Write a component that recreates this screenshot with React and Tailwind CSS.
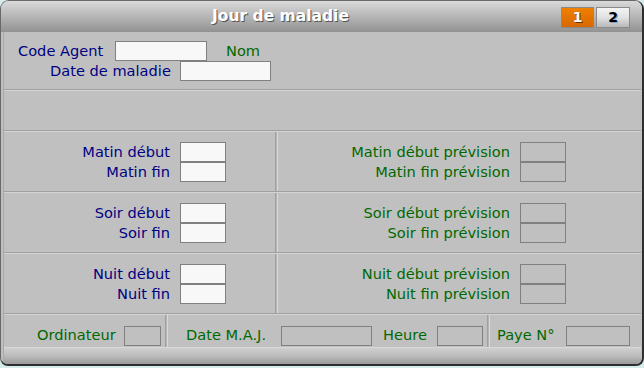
import React from "react";

const F = { fontFamily: '"DejaVu Sans", Verdana, sans-serif' };

function Inp({ w, white }) {
  return (
    <div
      className={`h-[20px] border border-[#808080] ${white ? "bg-[#f8f8f8]" : "bg-[#c0c0c0]"}`}
      style={{ width: w }}
    />
  );
}

function HSep() {
  return <div className="h-[2px] border-t border-[#a0a0a0] border-b border-b-[#d4d4d4]" />;
}

function VSep() {
  return <div className="w-[3px] self-stretch border-l border-[#a0a0a0] border-r border-r-[#d8d8d8] bg-[#b4b4b4]" />;
}

function Pair({ a, b, blue, padRight, white }) {
  const color = blue ? "text-[#000080]" : "text-[#006800]";
  return (
    <div className="flex-1 flex flex-col pt-[10px]" style={{ paddingRight: padRight }}>
      <div className="flex items-center justify-end h-[20px]">
        <span className={`${color} text-[14.6px] leading-none mr-[10px]`}>{a}</span>
        <Inp w={46} white={white} />
      </div>
      <div className="flex items-center justify-end h-[20px]">
        <span className={`${color} text-[14.6px] leading-none mr-[10px]`}>{b}</span>
        <Inp w={46} white={white} />
      </div>
    </div>
  );
}

function Row({ l1, l2, r1, r2 }) {
  return (
    <div className="flex h-[59px]">
      <div className="w-[271px] flex">
        <Pair a={l1} b={l2} blue padRight={49} white />
      </div>
      <VSep />
      <div className="flex-1 flex">
        <Pair a={r1} b={r2} padRight={75} />
      </div>
    </div>
  );
}

export default function App() {
  return (
    <div className="w-[644px] h-[368px] bg-[#d6ecea]" style={F}>
      <div className="w-[644px] h-[366px] rounded-t-[9px] rounded-b-[8px] border border-[#686868] border-r-2 border-b-2 border-r-[#2e2e2e] border-b-[#2e2e2e] overflow-hidden flex flex-col bg-[#c0c0c0]">
        {/* title bar */}
        <div className="h-[31px] flex items-center bg-gradient-to-b from-[#dadada] via-[#b6b6b6] to-[#929292]">
          <div className="flex-1 text-center">
            <span className="text-white font-bold text-[15.5px] [text-shadow:1px_1px_0_#555]">Jour de maladie</span>
          </div>
          <div className="w-[82px] flex gap-[2px] pl-[1px] pt-[1px]">
            <div className="w-[33px] h-[21px] border border-[#8a8a8a] bg-gradient-to-b from-[#f08000] to-[#d86800] flex items-center justify-center text-white font-bold text-[14px] [text-shadow:1px_1px_0_#6a3000]">1</div>
            <div className="w-[34px] h-[21px] border border-[#8a8a8a] bg-gradient-to-b from-[#f4f4f4] via-[#e2e2e2] to-[#b8b8b8] flex items-center justify-center text-black font-bold text-[14px] [text-shadow:1px_1px_0_#8aa0c0]">2</div>
          </div>
        </div>
        {/* body */}
        <div className="flex-1 flex flex-col pl-[2px] pr-[1px]">
          <div className="border-l border-[#a8a8a8] flex-1 flex flex-col">
            {/* top form */}
            <div className="h-[57px] pt-[9px] flex flex-col">
              <div className="flex items-center h-[20px]">
                <span className="ml-[14px] text-[#000080] text-[14.6px] leading-none w-[97px]">Code Agent</span>
                <Inp w={92} white />
                <span className="ml-[19px] text-[#006800] text-[14.6px] leading-none">Nom</span>
              </div>
              <div className="flex items-center h-[20px]">
                <span className="ml-[46px] text-[#000080] text-[14.6px] leading-none w-[130px]">Date de maladie</span>
                <Inp w={91} white />
              </div>
            </div>
            <HSep />
            <div className="h-[39px]" />
            <HSep />
            <Row l1="Matin début" l2="Matin fin" r1="Matin début prévision" r2="Matin fin prévision" />
            <HSep />
            <Row l1="Soir début" l2="Soir fin" r1="Soir début prévision" r2="Soir fin prévision" />
            <HSep />
            <Row l1="Nuit début" l2="Nuit fin" r1="Nuit début prévision" r2="Nuit fin prévision" />
            <HSep />
            {/* bottom row */}
            <div className="h-[32px] flex">
              <div className="w-[161px] flex items-center pt-[9px]">
                <span className="ml-[33px] text-[#006800] text-[14.6px] leading-none w-[87px]">Ordinateur</span>
                <Inp w={37} />
              </div>
              <VSep />
              <div className="w-[319px] flex items-center pt-[9px]">
                <span className="ml-[18px] text-[#006800] text-[14.6px] leading-none w-[95px]">Date M.A.J.</span>
                <Inp w={91} />
                <span className="ml-[11px] text-[#006800] text-[14.6px] leading-none w-[54px]">Heure</span>
                <Inp w={46} />
              </div>
              <VSep />
              <div className="flex-1 flex items-center pt-[9px]">
                <span className="ml-[7px] text-[#006800] text-[14.6px] leading-none w-[69px]">Paye N°</span>
                <Inp w={64} />
              </div>
            </div>
            <div className="flex-1 bg-gradient-to-b from-[#cfcfcf] via-[#bcbcbc] to-[#9a9a9a] border-t border-[#d8d8d8]" />
          </div>
        </div>
      </div>
    </div>
  );
}
